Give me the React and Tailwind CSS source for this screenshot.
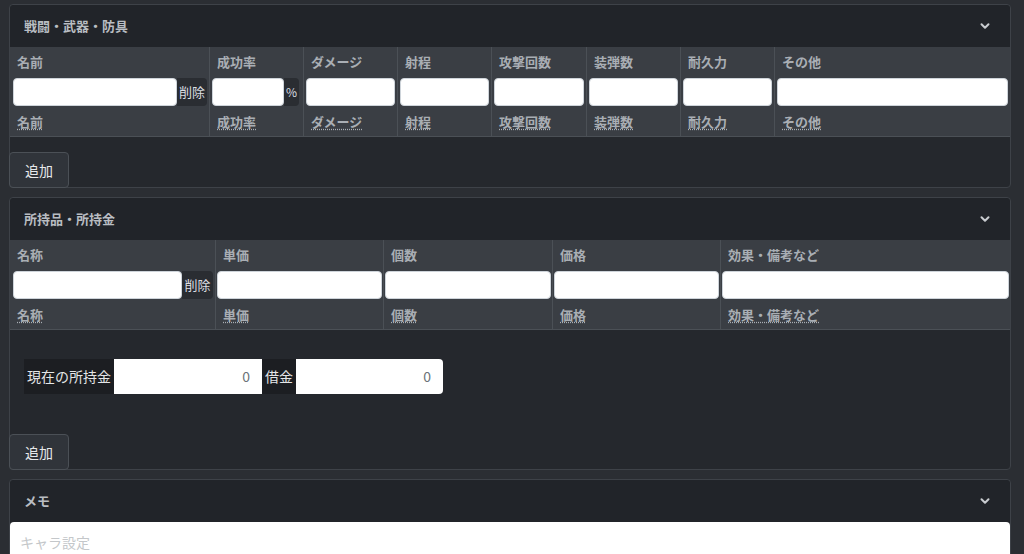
import React from "react";

const font = { fontFamily: '"Noto Sans CJK JP", "Noto Sans", sans-serif' };

const Chevron = () => (
  <svg width="10" height="10" viewBox="0 0 10 10" className="text-[#c9ccd0]">
    <path d="M1.5 3.2 L5 6.7 L8.5 3.2" fill="none" stroke="currentColor" strokeWidth="2" strokeLinecap="round" strokeLinejoin="round" />
  </svg>
);

const CardHeader = ({ title }) => (
  <div className="h-[42px] flex items-center justify-between pl-[14px] pr-[20px] bg-[#212429] rounded-t">
    <span className="text-[13px] font-bold text-[#b9bdc2]">{title}</span>
    <Chevron />
  </div>
);

const HeadCell = ({ children, last }) => (
  <div className={"h-[30px] flex items-center px-[7px] pb-[1px] text-[13px] font-bold text-[#a9aeb4] " + (last ? "" : "border-r border-[#4b5056]")}>
    {children}
  </div>
);

const FootCell = ({ children, last }) => (
  <div className={"h-[29px] flex items-center px-[7px] text-[13px] font-bold text-[#a9aeb4] " + (last ? "" : "border-r border-[#4b5056]")}>
    <abbr className="underline decoration-dotted decoration-[#a9aeb4] underline-offset-2">{children}</abbr>
  </div>
);

const Input = ({ className = "" }) => (
  <input className={"h-[28px] bg-white rounded-[4px] border border-[#ced4da] outline-none " + className} />
);

const AddButton = () => (
  <button className="w-[60px] h-[36px] -ml-px -mb-px bg-[#30343a] border border-[#4b5056] rounded text-[14px] text-[#e6e8ea]">
    追加
  </button>
);

const weaponCols = ["名前", "成功率", "ダメージ", "射程", "攻撃回数", "装弾数", "耐久力", "その他"];
const itemCols = ["名称", "単価", "個数", "価格", "効果・備考など"];

export default function App() {
  return (
    <div className="min-h-screen bg-[#2b2e33] pl-[9px] pr-[13px] pt-[4px] flex flex-col gap-[9px]" style={font}>
      {/* 戦闘・武器・防具 */}
      <div className="border border-[#3e4248] rounded bg-[#25282d]">
        <CardHeader title="戦闘・武器・防具" />
        <div className="bg-[#3a3e44] border-b border-[#4b5056]">
          <div className="grid grid-cols-[200px_94px_94px_94px_95px_94px_94px_1fr]">
            {weaponCols.map((c, i) => (
              <HeadCell key={c} last={i === weaponCols.length - 1}>{c}</HeadCell>
            ))}
          </div>
          <div className="grid grid-cols-[200px_94px_94px_94px_95px_94px_94px_1fr] h-[30px]">
            <div className="flex items-center pl-[3px] pr-[2px] border-r border-[#4b5056]">
              <Input className="w-[164px]" />
              <button className="h-[28px] w-[32px] bg-[#2a2d32] rounded-r text-[13px] text-[#dcdfe2] flex items-center justify-center">削除</button>
            </div>
            <div className="flex items-center pl-[2px] pr-[4px] border-r border-[#4b5056]">
              <Input className="w-[72px]" />
              <span className="h-[28px] w-[16px] bg-[#2a2d32] rounded-r text-[12px] text-[#dcdfe2] flex items-center justify-center">%</span>
            </div>
            {[0, 1, 2, 3, 4, 5].map((i) => (
              <div key={i} className={"flex items-center px-[2px] " + (i < 5 ? "border-r border-[#4b5056]" : "")}>
                <Input className="w-full" />
              </div>
            ))}
          </div>
          <div className="grid grid-cols-[200px_94px_94px_94px_95px_94px_94px_1fr]">
            {weaponCols.map((c, i) => (
              <FootCell key={c} last={i === weaponCols.length - 1}>{c}</FootCell>
            ))}
          </div>
        </div>
        <div className="pt-[15px] flex">
          <AddButton />
        </div>
      </div>

      {/* 所持品・所持金 */}
      <div className="border border-[#3e4248] rounded bg-[#25282d]">
        <CardHeader title="所持品・所持金" />
        <div className="bg-[#3a3e44] border-b border-[#4b5056]">
          <div className="grid grid-cols-[206px_168px_169px_168px_1fr]">
            {itemCols.map((c, i) => (
              <HeadCell key={c} last={i === itemCols.length - 1}>{c}</HeadCell>
            ))}
          </div>
          <div className="grid grid-cols-[206px_168px_169px_168px_1fr] h-[30px]">
            <div className="flex items-center pl-[3px] pr-[2px] border-r border-[#4b5056]">
              <Input className="w-[169px]" />
              <button className="h-[28px] w-[32px] bg-[#2a2d32] rounded-r text-[13px] text-[#dcdfe2] flex items-center justify-center">削除</button>
            </div>
            {[0, 1, 2, 3].map((i) => (
              <div key={i} className={"flex items-center px-[1px] " + (i < 3 ? "border-r border-[#4b5056]" : "")}>
                <Input className="w-full" />
              </div>
            ))}
          </div>
          <div className="grid grid-cols-[206px_168px_169px_168px_1fr]">
            {itemCols.map((c, i) => (
              <FootCell key={c} last={i === itemCols.length - 1}>{c}</FootCell>
            ))}
          </div>
        </div>
        <div className="pt-[29px] pl-[14px] flex">
          <div className="flex h-[35px]">
            <span className="bg-[#1c1e22] px-[3px] flex items-center text-[14px] text-[#e4e6e8]">現在の所持金</span>
            <input className="w-[148px] bg-white text-right pr-[12px] text-[14px] text-[#6c7379] outline-none" defaultValue="0" />
            <span className="bg-[#1c1e22] px-[3px] flex items-center text-[14px] text-[#e4e6e8]">借金</span>
            <input className="w-[147px] bg-white text-right pr-[12px] text-[14px] text-[#6c7379] rounded-r outline-none" defaultValue="0" />
          </div>
        </div>
        <div className="pt-[40px] flex">
          <AddButton />
        </div>
      </div>

      {/* メモ */}
      <div className="border border-[#3e4248] rounded bg-[#25282d]">
        <CardHeader title="メモ" />
        <textarea
          className="block w-full h-[80px] bg-white rounded-t-[4px] px-[10px] py-[10px] text-[14px] text-[#333] placeholder:text-[#c4c7ca] outline-none resize-none"
          placeholder="キャラ設定"
        />
      </div>
    </div>
  );
}
